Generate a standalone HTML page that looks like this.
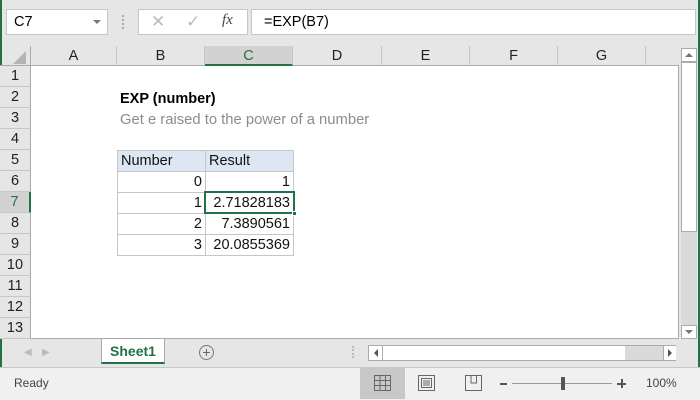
<!DOCTYPE html>
<html><head><style>
*{margin:0;padding:0;box-sizing:border-box}
body{width:700px;height:400px;overflow:hidden;background:#e6e6e6;font-family:"Liberation Sans",Calibri,sans-serif;position:relative}
.a{position:absolute}
.ch{position:absolute;top:46px;height:20px;border-right:1px solid #c6c6c6;border-bottom:1px solid #ababab;text-align:center;font-size:14.5px;line-height:20px;color:#222}
.rh{position:absolute;left:0;width:31px;height:21px;border-bottom:1px solid #c6c6c6;border-right:1px solid #ababab;text-align:center;font-size:14.5px;line-height:21px;color:#222;background:#e6e6e6}
.c{position:absolute;height:22px;border:1px solid #c6c6c6;font-size:14.5px;line-height:20px;padding:0 3px;text-align:right;color:#111}
</style></head><body>
<div class="a" style="left:0;top:0;width:2px;height:400px;background:#217346"></div>
<div class="a" style="right:0;top:0;width:2px;height:400px;background:#217346"></div>
<div class="a" style="left:0;bottom:0;width:700px;height:1px;background:#217346"></div>
<div class="a" style="left:6px;top:9px;width:102px;height:26px;background:#fff;border:1px solid #c6c6c6;font-size:14.5px;line-height:24px;padding-left:7px">C7</div>
<div class="a" style="left:93px;top:20px;border-left:4px solid transparent;border-right:4px solid transparent;border-top:4px solid #777"></div>
<div class="a" style="left:122px;top:15px;width:2px;height:14px;border-left:2px dotted #aaa"></div>
<div class="a" style="left:138px;top:9px;width:110px;height:26px;background:#fff;border:1px solid #c6c6c6"></div>
<div class="a" style="left:151px;top:12px;font-size:17px;color:#bbb">✕</div>
<div class="a" style="left:186px;top:12px;font-size:17px;color:#bbb">✓</div>
<div class="a" style="left:222px;top:12px;font-size:15px;font-style:italic;font-family:'Liberation Serif',serif;color:#444">fx</div>
<div class="a" style="left:251px;top:9px;width:445px;height:26px;background:#fff;border:1px solid #c6c6c6;font-size:14.5px;line-height:24px;padding-left:12px">=EXP(B7)</div>
<div class="a" style="left:0;top:46px;width:31px;height:20px;border-right:1px solid #ababab;border-bottom:1px solid #ababab"></div>
<div class="a" style="left:13px;top:51px;border-left:13px solid transparent;border-bottom:13px solid #b4b4b4"></div>
<div class="ch" style="left:31px;width:86px">A</div>
<div class="ch" style="left:117px;width:88px">B</div>
<div class="ch" style="left:205px;width:88px;background:#d2d2d2;border-bottom:2px solid #217346;color:#217346">C</div>
<div class="ch" style="left:293px;width:89px">D</div>
<div class="ch" style="left:382px;width:88px">E</div>
<div class="ch" style="left:470px;width:88px">F</div>
<div class="ch" style="left:558px;width:88px">G</div>
<div class="ch" style="left:646px;width:33px;border-right:none"></div>
<div class="a" style="left:31px;top:66px;width:648px;height:273px;background:#fff;border-right:1px solid #ababab;border-bottom:1px solid #ababab"></div>
<div class="rh" style="top:66px">1</div>
<div class="rh" style="top:87px">2</div>
<div class="rh" style="top:108px">3</div>
<div class="rh" style="top:129px">4</div>
<div class="rh" style="top:150px">5</div>
<div class="rh" style="top:171px">6</div>
<div class="rh" style="top:192px;background:#d2d2d2;border-right:2px solid #217346;color:#217346">7</div>
<div class="rh" style="top:213px">8</div>
<div class="rh" style="top:234px">9</div>
<div class="rh" style="top:255px">10</div>
<div class="rh" style="top:276px">11</div>
<div class="rh" style="top:297px">12</div>
<div class="rh" style="top:318px">13</div>
<div class="a" style="left:120px;top:89px;font-size:14.5px;font-weight:bold;line-height:20px">EXP (number)</div>
<div class="a" style="left:120px;top:110px;font-size:14.8px;color:#8c8c8c;line-height:20px">Get e raised to the power of a number</div>
<div class="c" style="left:117px;top:150px;width:89px;background:#dde7f3;text-align:left">Number</div>
<div class="c" style="left:205px;top:150px;width:89px;background:#dde7f3;text-align:left">Result</div>
<div class="c" style="left:117px;top:171px;width:89px">0</div>
<div class="c" style="left:205px;top:171px;width:89px">1</div>
<div class="c" style="left:117px;top:192px;width:89px">1</div>
<div class="c" style="left:205px;top:192px;width:89px">2.71828183</div>
<div class="c" style="left:117px;top:213px;width:89px">2</div>
<div class="c" style="left:205px;top:213px;width:89px">7.3890561</div>
<div class="c" style="left:117px;top:234px;width:89px">3</div>
<div class="c" style="left:205px;top:234px;width:89px">20.0855369</div>
<div class="a" style="left:204px;top:191px;width:91px;height:23px;border:2px solid #217346"></div>
<div class="a" style="left:292px;top:211px;width:5px;height:5px;background:#217346;border:1px solid #fff"></div>
<div class="a" style="left:681px;top:48px;width:16px;height:14px;background:#fff;border:1px solid #ababab"></div>
<div class="a" style="left:685px;top:53px;border-left:4px solid transparent;border-right:4px solid transparent;border-bottom:4px solid #777"></div>
<div class="a" style="left:681px;top:62px;width:16px;height:170px;background:#fff;border:1px solid #ababab"></div>
<div class="a" style="left:681px;top:232px;width:16px;height:93px;background:#dadada"></div>
<div class="a" style="left:681px;top:325px;width:16px;height:14px;background:#fff;border:1px solid #ababab"></div>
<div class="a" style="left:685px;top:330px;border-left:4px solid transparent;border-right:4px solid transparent;border-top:4px solid #777"></div>
<div class="a" style="left:24px;top:347px;font-size:10px;color:#bbb">◀</div>
<div class="a" style="left:42px;top:347px;font-size:10px;color:#bbb">▶</div>
<div class="a" style="left:101px;top:339px;width:64px;height:25px;background:#fff;border-bottom:2px solid #217346;border-left:1px solid #ababab;border-right:1px solid #ababab;font-size:14px;font-weight:bold;color:#217346;text-align:center;line-height:24px">Sheet1</div>
<div class="a" style="left:199px;top:345px;width:15px;height:15px;border:1px solid #777;border-radius:50%;font-size:14px;line-height:12px;text-align:center;color:#666">+</div>
<div class="a" style="left:352px;top:346px;width:2px;height:12px;border-left:2px dotted #bbb"></div>
<div class="a" style="left:368px;top:345px;width:308px;height:16px;background:#dadada;border:1px solid #ababab"></div>
<div class="a" style="left:369px;top:346px;width:256px;height:14px;background:#fff"></div>
<div class="a" style="left:369px;top:346px;width:14px;height:14px;background:#fff;border-right:1px solid #ababab"></div>
<div class="a" style="left:374px;top:349px;border-top:4px solid transparent;border-bottom:4px solid transparent;border-right:4px solid #555"></div>
<div class="a" style="left:663px;top:346px;width:13px;height:14px;background:#fff;border-left:1px solid #ababab"></div>
<div class="a" style="left:668px;top:349px;border-top:4px solid transparent;border-bottom:4px solid transparent;border-left:4px solid #555"></div>
<div class="a" style="left:0;top:367px;width:700px;height:33px;background:#f0f0f0;border-top:1px solid #c6c6c6"></div>
<div class="a" style="left:14px;top:376px;font-size:12px;color:#444">Ready</div>
<div class="a" style="left:360px;top:368px;width:45px;height:31px;background:#c8c8c8"></div>
<svg class="a" style="left:374px;top:375px" width="18" height="17" viewBox="0 0 18 17"><g fill="none" stroke="#666"><rect x="0.5" y="0.5" width="16" height="15"/><path d="M6 1V16M11.5 1V16M1 5.5H17M1 10.5H17"/></g></svg>
<svg class="a" style="left:418px;top:375px" width="18" height="17"><g fill="none" stroke="#666"><rect x="0.5" y="0.5" width="16" height="15"/><rect x="3.5" y="3.5" width="10" height="9"/><path d="M5 6H12M5 8H12M5 10H12"/></g></svg>
<svg class="a" style="left:465px;top:375px" width="18" height="17"><g fill="none" stroke="#666"><rect x="0.5" y="0.5" width="16" height="15"/><path d="M6 1V8H11.5V1"/></g></svg>
<div class="a" style="left:500px;top:383px;width:7px;height:2px;background:#555"></div>
<div class="a" style="left:512px;top:383px;width:100px;height:1px;background:#999"></div>
<div class="a" style="left:561px;top:377px;width:4px;height:13px;background:#555"></div>
<div class="a" style="left:617px;top:383px;width:9px;height:2px;background:#555"></div>
<div class="a" style="left:620.5px;top:379px;width:2px;height:9px;background:#555"></div>
<div class="a" style="left:646px;top:376px;font-size:12px;color:#444">100%</div>
</body></html>
